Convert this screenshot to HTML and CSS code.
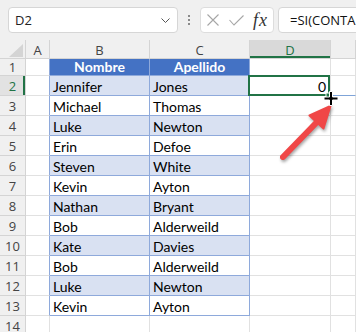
FILE: index.html
```html
<!DOCTYPE html>
<html lang="es">
<head>
    <meta charset="UTF-8">
    <meta name="viewport" content="width=device-width, initial-scale=1.0">
    <title>Hoja - SI(CONTAR)</title>
    <link rel="stylesheet" href="styles.css">
</head>
<body>
    <div class="app">
        <div class="formula-bar">
            <div class="name-box">
                <span>D2</span>
                <svg class="chevron" width="9" height="5" viewBox="0 0 9 5"><polyline points="0.5,0.5 4.5,4.5 8.5,0.5" fill="none" stroke="#555" stroke-width="1"/></svg>
            </div>
            <div class="grip"><span></span><span></span><span></span></div>
            <div class="fx-box">
                <svg class="icon-x" width="12" height="12" viewBox="0 0 12 12"><path d="M0.5 0.5 L11.5 11.5 M11.5 0.5 L0.5 11.5" stroke="#a6a6a6" stroke-width="1.1" fill="none"/></svg>
                <svg class="icon-check" width="15" height="11" viewBox="0 0 15 11"><polyline points="0.5,5 5,10 14.5,0.5" stroke="#a6a6a6" stroke-width="1.1" fill="none"/></svg>
                <span class="fx">fx</span>
            </div>
            <div class="formula-input">=SI(CONTA</div>
        </div>

        <div class="sheet">
            <!-- cabecera de columnas -->
            <div class="cell corner"><svg width="16" height="14" viewBox="0 0 16 14"><polygon points="15,0 15,13 1,13" fill="#d4d4d4"/></svg></div>
            <div class="cell ch">A</div>
            <div class="cell ch">B</div>
            <div class="cell ch">C</div>
            <div class="cell ch ch-sel">D</div>
            <div class="cell ch"></div>

            <!-- fila 1 -->
            <div class="cell rh rh-first">1</div>
            <div class="cell edge"></div>
            <div class="cell tb th">Nombre</div>
            <div class="cell tb th">Apellido</div>
            <div class="cell first"></div>
            <div class="cell first"></div>

            <div class="cell rh rh-sel">2</div>
            <div class="cell edge"></div>
            <div class="cell tb band">Jennifer</div>
            <div class="cell tb band">Jones</div>
            <div class="cell active">0</div>
            <div class="cell preview"></div>

            <div class="cell rh">3</div>
            <div class="cell edge"></div>
            <div class="cell tb">Michael</div>
            <div class="cell tb">Thomas</div>
            <div class="cell"></div>
            <div class="cell"></div>

            <div class="cell rh">4</div>
            <div class="cell edge"></div>
            <div class="cell tb band">Luke</div>
            <div class="cell tb band">Newton</div>
            <div class="cell"></div>
            <div class="cell"></div>

            <div class="cell rh">5</div>
            <div class="cell edge"></div>
            <div class="cell tb">Erin</div>
            <div class="cell tb">Defoe</div>
            <div class="cell"></div>
            <div class="cell"></div>

            <div class="cell rh">6</div>
            <div class="cell edge"></div>
            <div class="cell tb band">Steven</div>
            <div class="cell tb band">White</div>
            <div class="cell"></div>
            <div class="cell"></div>

            <div class="cell rh">7</div>
            <div class="cell edge"></div>
            <div class="cell tb">Kevin</div>
            <div class="cell tb">Ayton</div>
            <div class="cell"></div>
            <div class="cell"></div>

            <div class="cell rh">8</div>
            <div class="cell edge"></div>
            <div class="cell tb band">Nathan</div>
            <div class="cell tb band">Bryant</div>
            <div class="cell"></div>
            <div class="cell"></div>

            <div class="cell rh">9</div>
            <div class="cell edge"></div>
            <div class="cell tb">Bob</div>
            <div class="cell tb">Alderweild</div>
            <div class="cell"></div>
            <div class="cell"></div>

            <div class="cell rh">10</div>
            <div class="cell edge"></div>
            <div class="cell tb band">Kate</div>
            <div class="cell tb band">Davies</div>
            <div class="cell"></div>
            <div class="cell"></div>

            <div class="cell rh">11</div>
            <div class="cell edge"></div>
            <div class="cell tb">Bob</div>
            <div class="cell tb">Alderweild</div>
            <div class="cell"></div>
            <div class="cell"></div>

            <div class="cell rh">12</div>
            <div class="cell edge"></div>
            <div class="cell tb band">Luke</div>
            <div class="cell tb band">Newton</div>
            <div class="cell"></div>
            <div class="cell"></div>

            <div class="cell rh">13</div>
            <div class="cell edge"></div>
            <div class="cell tb">Kevin</div>
            <div class="cell tb">Ayton</div>
            <div class="cell"></div>
            <div class="cell"></div>

            <div class="cell rh">14</div>
            <div class="cell"></div>
            <div class="cell"></div>
            <div class="cell"></div>
            <div class="cell"></div>
            <div class="cell"></div>
        </div>

        <!-- flecha y cursor de relleno -->
        <svg class="overlay" width="356" height="332" viewBox="0 0 356 332">
            <g class="arrow">
                <line x1="283" y1="157" x2="317" y2="122" stroke="#f04747" stroke-width="6" stroke-linecap="round"/>
                <polygon points="330.5,106 309.5,115.5 323.5,128.5" fill="#f04747" stroke="#f04747" stroke-width="2" stroke-linejoin="round"/>
            </g>
            <rect x="326" y="93" width="6" height="6" fill="#217346" stroke="#fff" stroke-width="1"/>
            <path d="M329.5 91.5 h3 v5.5 h5.5 v3 h-5.5 v5.5 h-3 v-5.5 h-5.5 v-3 h5.5 z" fill="#000" stroke="#fff" stroke-width="1"/>
        </svg>
    </div>
</body>
</html>
```

FILE: styles.css
```css
body {
    margin: 0;
    padding: 0;
    background-color: #FFFFFF;
    overflow: hidden;
}
.app {
    position: relative;
    width: 356px;
    height: 332px;
    overflow: hidden;
    background-color: #FFFFFF;
}

/* barra de fórmulas */
.formula-bar {
    display: flex;
    align-items: center;
    height: 40px;
    padding-left: 8px;
    background-color: #F0F0F0;
    font-family: "Open Sans", sans-serif;
    font-size: 13px;
    color: #222;
}
.name-box {
    width: 170px;
    height: 26px;
    box-sizing: border-box;
    display: flex;
    align-items: center;
    justify-content: space-between;
    padding: 0 4px 0 6px;
    background-color: #FFFFFF;
    border: 1px solid #D6D6D6;
    border-radius: 4px;
}
.chevron {
    margin-right: 3px;
}
.grip {
    width: 22px;
    display: flex;
    flex-direction: column;
    align-items: center;
    gap: 2px;
}
.grip span {
    width: 2px;
    height: 2px;
    background-color: #8A8A8A;
}
.fx-box {
    width: 74px;
    height: 26px;
    box-sizing: border-box;
    display: flex;
    align-items: center;
    padding-left: 6px;
    background-color: #FFFFFF;
    border: 1px solid #DDDDDD;
    border-radius: 4px;
}
.icon-check {
    margin-left: 10px;
}
.fx {
    margin-left: 9px;
    font-family: "Liberation Serif", serif;
    font-style: italic;
    font-size: 18px;
    letter-spacing: 1px;
    color: #333;
    line-height: 1;
}
.formula-input {
    flex: 1;
    height: 26px;
    box-sizing: border-box;
    margin-left: 4px;
    margin-right: -10px;
    padding-left: 11px;
    display: flex;
    align-items: center;
    background-color: #FFFFFF;
    border: 1px solid #D6D6D6;
    border-radius: 4px;
    white-space: nowrap;
    overflow: hidden;
    color: #111;
}

/* hoja */
.sheet {
    display: grid;
    grid-template-columns: 26px 24px 100px 100px 81px 25px;
    grid-template-rows: 19px 17px;
    grid-auto-rows: 20px;
    font-family: Lato, sans-serif;
    font-size: 14px;
    color: #000;
}
.cell {
    box-sizing: border-box;
    border-right: 1px solid #E1E1E1;
    border-bottom: 1px solid #E1E1E1;
    padding: 1px 3px 0 3px;
    line-height: 19px;
    white-space: nowrap;
    overflow: hidden;
}
.corner {
    background-color: #F0F0F0;
    border-color: #D4D4D4;
    padding: 4px 0 0 8px;
    line-height: 0;
}
.ch {
    background-color: #F0F0F0;
    border-color: #D4D4D4;
    text-align: center;
    font-family: "Open Sans", sans-serif;
    font-size: 13px;
    line-height: 18px;
    color: #444;
}
.ch-sel {
    background-color: #D9D9D9;
    color: #217346;
    box-shadow: inset 0 -2px 0 #217346;
}
.rh {
    background-color: #F0F0F0;
    border-color: #D4D4D4;
    text-align: center;
    padding: 1px 0 0 0;
    font-family: "Open Sans", sans-serif;
    font-size: 13px;
    color: #444;
}
.rh-first {
    padding-top: 0;
    line-height: 16px;
}
.rh-sel {
    background-color: #E2E2E2;
    color: #217346;
    box-shadow: inset -2px 0 0 #217346;
}
.edge {
    border-right-color: #8EA9DB;
}
.tb {
    border-color: #8EA9DB;
}
.th {
    background-color: #4472C4;
    color: #FFFFFF;
    font-weight: bold;
    text-align: center;
    padding-top: 0;
    line-height: 16px;
}
.first {
    line-height: 16px;
}
.band {
    background-color: #D9E1F2;
}
.active {
    position: relative;
    overflow: visible;
    text-align: right;
    padding-right: 4px;
}
.active::after {
    content: "";
    position: absolute;
    top: -1px;
    left: -2px;
    right: 0;
    bottom: -1px;
    border: 2px solid #217346;
}
.preview {
    border-bottom-color: #7FA4D8;
}

/* anotaciones */
.overlay {
    position: absolute;
    top: 0;
    left: 0;
    pointer-events: none;
}
.arrow {
    filter: drop-shadow(1px 2px 1.5px rgba(0, 0, 0, 0.35));
}
```
